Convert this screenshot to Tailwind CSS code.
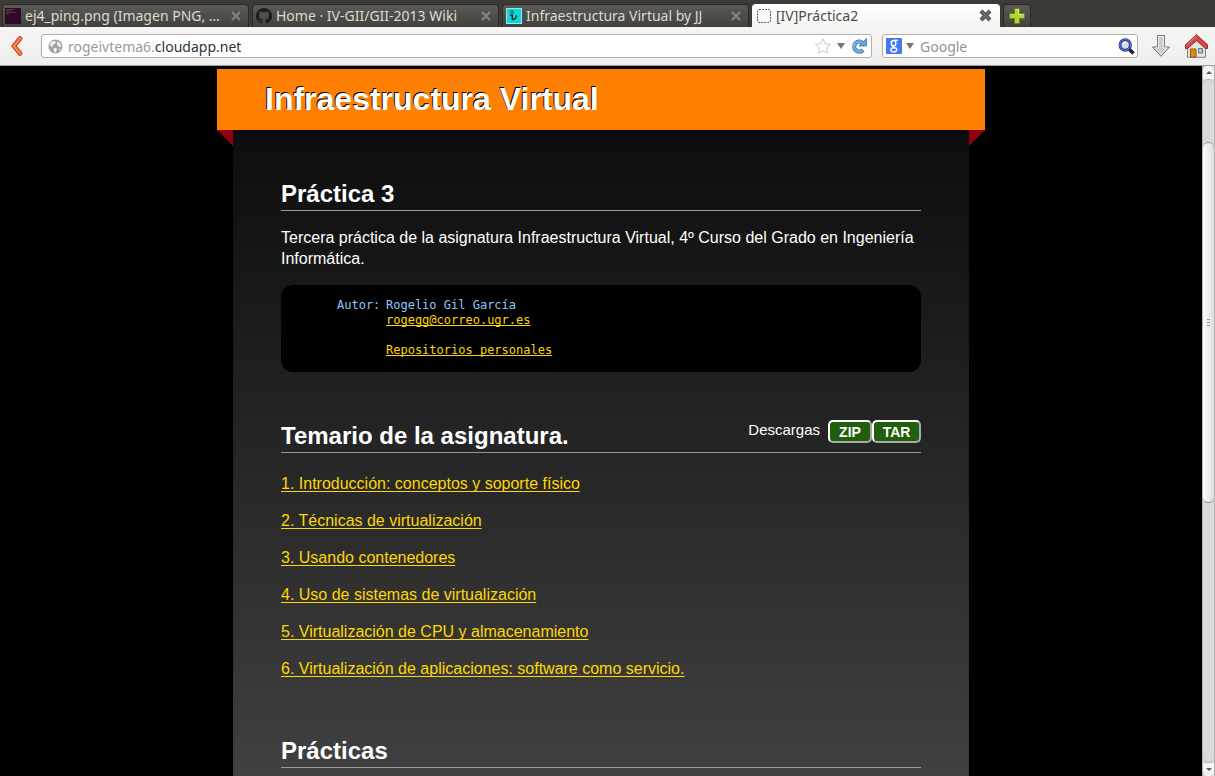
<!DOCTYPE html>
<html lang="es">
<head>
<meta charset="utf-8">
<title>[IV]Práctica2</title>
<script src="https://cdn.jsdelivr.net/npm/@tailwindcss/browser@4"></script>
</head>
<body class="flex h-screen flex-col overflow-hidden bg-black font-['Noto_Sans',sans-serif]">

<!-- Tab strip -->
<nav aria-label="Pestañas" class="flex h-[27px] shrink-0 items-end gap-[3px] bg-[#3c3b37] pl-[2px] text-[14px] leading-[22px] text-[#dfdbd2]">
  <div class="flex h-[23px] w-[247px] items-center gap-1 rounded-t border border-b-0 border-[#2b2a27] bg-linear-to-b from-[#5b5a56] to-[#42413c] pr-[6px] pl-[2px]">
    <svg class="size-4 shrink-0" viewBox="0 0 16 16" aria-hidden="true"><rect width="16" height="16" fill="#300a24"/><path d="M1 1.5h9M1 3h6M1 4.500h10M1 6h3" stroke="#6b4560" stroke-width=".7"/></svg>
    <a href="#" class="min-w-0 flex-1 truncate">ej4_ping.png (Imagen PNG, …</a>
    <button aria-label="Cerrar pestaña"><svg class="size-3" viewBox="0 0 12 12"><path d="M2 2l8 8M10 2l-8 8" stroke="#85837d" stroke-width="2.200"/></svg></button>
  </div>
  <div class="flex h-[23px] w-[247px] items-center gap-1 rounded-t border border-b-0 border-[#2b2a27] bg-linear-to-b from-[#5b5a56] to-[#42413c] pr-[6px] pl-[3px]">
    <svg class="size-4 shrink-0" viewBox="0 0 16 16" aria-hidden="true"><path fill="#1b1b1b" d="M8 0a8 8 0 0 0-2.530 15.590c.4.070.55-.17.55-.38v-1.490c-2.010.37-2.530-.49-2.690-.94-.09-.23-.48-.94-.82-1.130-.28-.15-.68-.52-.01-.53.63-.01 1.080.58 1.230.82.72 1.210 1.870.87 2.330.66.070-.52.280-.87.510-1.070-1.780-.2-3.640-.89-3.640-3.950 0-.87.310-1.590.82-2.150-.08-.2-.36-1.020.08-2.120 0 0 .67-.21 2.200.82a7.400 7.400 0 0 1 4 0c1.530-1.040 2.200-.82 2.200-.82.44 1.100.16 1.920.08 2.120.51.56.82 1.270.82 2.150 0 3.070-1.870 3.750-3.650 3.950.29.25.54.73.54 1.480v2.200c0 .21.15.46.55.38A8 8 0 0 0 8 0z"/></svg>
    <a href="#" class="min-w-0 flex-1 truncate">Home · IV-GII/GII-2013 Wiki</a>
    <button aria-label="Cerrar pestaña"><svg class="size-3" viewBox="0 0 12 12"><path d="M2 2l8 8M10 2l-8 8" stroke="#85837d" stroke-width="2.200"/></svg></button>
  </div>
  <div class="flex h-[23px] w-[247px] items-center gap-1 rounded-t border border-b-0 border-[#2b2a27] bg-linear-to-b from-[#5b5a56] to-[#42413c] pr-[6px] pl-[3px]">
    <svg class="size-4 shrink-0" viewBox="0 0 16 16" aria-hidden="true"><rect x=".5" y=".5" width="15" height="15" fill="#16d5da" stroke="#8deef0"/><circle cx="6" cy="4" r="1.300" fill="none" stroke="#14343a" stroke-width=".8"/><path d="M4 7.300H6.200L6.300 11.300C8.500 12 10.500 10 10.500 7.200" fill="none" stroke="#14343a" stroke-width="1.600"/></svg>
    <a href="#" class="min-w-0 flex-1 truncate">Infraestructura Virtual by JJ</a>
    <button aria-label="Cerrar pestaña"><svg class="size-3" viewBox="0 0 12 12"><path d="M2 2l8 8M10 2l-8 8" stroke="#85837d" stroke-width="2.200"/></svg></button>
  </div>
  <div class="flex h-[23px] w-[248px] items-center gap-1 rounded-t bg-linear-to-b from-white to-[#f5f4f3] pr-2 pl-1 text-[#4c4c4c]">
    <svg class="size-4 shrink-0" viewBox="0 0 16 16" aria-hidden="true"><rect x="1.500" y="1.500" width="13" height="13" rx="1.500" fill="none" stroke="#5c5c5c" stroke-dasharray="2 1"/></svg>
    <a href="#" aria-current="page" class="min-w-0 flex-1 truncate">[IV]Práctica2</a>
    <button aria-label="Cerrar pestaña"><svg class="size-[13px]" viewBox="0 0 13 13"><path d="M2 2l9 9M11 2l-9 9" stroke="#4a4a48" stroke-width="4"/><path d="M2.500 2.500l8 8M10.500 2.500l-8 8" stroke="#6c6c69" stroke-width="2"/></svg></button>
  </div>
  <button aria-label="Nueva pestaña" class="flex h-[23px] w-7 items-center justify-center rounded-t border border-b-0 border-[#2b2a27] bg-linear-to-b from-[#5b5a56] to-[#42413c]">
    <svg class="size-4" viewBox="0 0 16 16"><path d="M5.500.5h5v5h5v5h-5v5h-5v-5h-5v-5h5z" fill="#b4d335" stroke="#5f8a10"/><path d="M6.500 1.500h3v5h5" fill="none" stroke="#d9ec7c"/></svg>
  </button>
</nav>

<!-- Navigation toolbar -->
<div class="flex h-[39px] shrink-0 items-center border-b border-[#a3a39b] bg-linear-to-b from-[#f6f5f4] to-[#efeeec] pr-[7px] pl-[10px] text-[14px]">
  <button aria-label="Atrás" class="mr-[17px]">
    <svg class="h-5 w-[14px]" viewBox="0 0 14 20"><path d="M10 2.500L4 10l6 7.500" fill="none" stroke="#c2401c" stroke-width="4.600" stroke-linecap="round"/><path d="M10 2.500L4 10l6 7.500" fill="none" stroke="#f08650" stroke-width="2.800" stroke-linecap="round"/></svg>
  </button>
  <div class="flex h-6 min-w-0 flex-1 items-center rounded-[3px] border border-[#b0afa8] bg-white pr-1 pl-[6px]">
    <svg class="mr-[5px] size-[15px] shrink-0" viewBox="0 0 15 15" aria-hidden="true"><circle cx="7.500" cy="7.500" r="7" fill="#a1a1a1"/><path d="M2 4l3-2 3 .5L7 5 5 6l-.5 2L2 7zM9 2.500l3 1.500 1.500 3.500-2 .5-2.500-2zM6 8.500l3 1-.5 3L7 14l-1.500-3zM11 10l2-.5-1.500 2.500z" fill="#eee"/></svg>
    <a href="#" class="min-w-0 flex-1 truncate text-[#2e3436]"><span class="text-[#9a9a9a]">rogeivtema6.</span>cloudapp.net</a>
    <button aria-label="Añadir a marcadores"><svg class="size-4" viewBox="0 0 16 16"><path d="M8 .8l2.200 4.900 5.300.6-4 3.600 1.100 5.300L8 12.500l-4.600 2.700 1.100-5.300-4-3.600 5.300-.6z" fill="#fff" stroke="#c9c9c9"/></svg></button>
    <button aria-label="Mostrar historial" class="mr-[6px] ml-[6px]"><svg class="h-[6px] w-2" viewBox="0 0 8 6"><path d="M0 0h8L4 6z" fill="#77766f"/></svg></button>
    <button aria-label="Recargar"><svg class="size-4" viewBox="0 0 16 16"><path d="M11.500 4.800A5 5 0 1 0 12 12" fill="none" stroke="#3d76ad" stroke-width="4.200"/><path d="M15.500.5v7.500H8z" fill="#6ba5d7" stroke="#3d76ad" stroke-width=".8"/><path d="M11.500 4.800A5 5 0 1 0 12 12" fill="none" stroke="#79b0dd" stroke-width="2.600"/></svg></button>
  </div>
  <form class="ml-[10px] flex h-6 w-64 shrink-0 items-center rounded-[3px] border border-[#b0afa8] bg-white pr-[2px] pl-[3px]">
    <button type="button" aria-label="Elegir buscador" class="flex items-center gap-1">
      <svg class="size-4" viewBox="0 0 16 16"><rect width="16" height="16" rx="1" fill="#4378f5"/><ellipse cx="7.600" cy="5.200" rx="2.300" ry="2.600" fill="none" stroke="#fff" stroke-width="1.500"/><path d="M8 2.300h4" stroke="#fff" stroke-width="1.200"/><path d="M7 7.800c-1 1 .5 1.400 1.800 2" fill="none" stroke="#fff" stroke-width="1.300"/><ellipse cx="7.800" cy="11.800" rx="3" ry="2.100" fill="none" stroke="#fff" stroke-width="1.400"/></svg>
      <svg class="h-[6px] w-2" viewBox="0 0 8 6"><path d="M0 0h8L4 6z" fill="#77766f"/></svg>
    </button>
    <input type="text" aria-label="Buscar en Google" placeholder="Google" class="ml-[6px] min-w-0 flex-1 bg-transparent placeholder:text-[#939393] focus:outline-none">
    <button type="button" aria-label="Buscar"><svg class="size-[17px]" viewBox="0 0 17 17"><path d="M10.500 10.500l5 5" stroke="#222" stroke-width="3.600"/><circle cx="7.200" cy="7" r="5.200" fill="#d8dcea" stroke="#24398c" stroke-width="3"/><circle cx="7.200" cy="7" r="5.400" fill="none" stroke="#6b82d0" stroke-width="1"/><path d="M5 6a3 3 0 0 1 3-2" fill="none" stroke="#fff" stroke-width="1.500"/></svg></button>
  </form>
  <button aria-label="Descargas" class="ml-[14px]"><svg class="h-[22px] w-[18px]" viewBox="0 0 18 22"><path d="M5.500.5h7v11.500h5L9 21.300.5 12h5z" fill="#c9cdcf" stroke="#75797b"/><path d="M6.500 1.500h5v11.500h3.500L9 19.500 3 13h3.500z" fill="none" stroke="#eceeee"/></svg></button>
  <button aria-label="Inicio" class="ml-[15px]"><svg class="h-6 w-[23px]" viewBox="0 0 23 24"><path d="M2.500 12L11.500 4l9 8v11.300h-18z" fill="#e4e4e0" stroke="#80807c"/><path d="M5.500 15h5.500v8H5.500z" fill="#d98a1c" stroke="#8f5902"/><path d="M13.500 14.500h4v4.500h-4z" fill="#b8cbd6" stroke="#61727c"/><path d="M11.500.7L.5 10.700v3.800h2l9-8 9 8h2v-3.800z" fill="#d14a4a" stroke="#9d2626"/><path d="M11.500 2L1.500 11.200" stroke="#ea8787"/></svg></button>
</div>

<div class="flex min-h-0 flex-1">
  <!-- Page -->
  <main class="min-w-0 flex-1 overflow-hidden pt-[3px] font-['Liberation_Sans',Arial,sans-serif] text-[16px] leading-[21px] text-white">
    <div class="mx-auto max-w-3xl">
      <header class="bg-[#ff8000] px-12 pt-[10px] pb-[11px]">
        <h1 class="text-[32px] leading-10 font-bold [text-shadow:-1px_-1px_0_#000]">Infraestructura Virtual</h1>
      </header>
      <div class="flex items-start">
        <svg class="size-4 shrink-0" viewBox="0 0 16 16" aria-hidden="true"><path d="M0 0h16v16z" fill="#8e000b"/></svg>
        <div class="min-w-0 flex-1 bg-linear-to-b from-[#0d0d0d] to-[#424242] px-12 pt-12 pb-6 shadow-[inset_0_5px_4px_-3px_#000]">
          <section>
            <h2 class="border-b border-[#999] text-[24px] leading-8 font-bold">Práctica 3</h2>
            <p class="mt-4">Tercera práctica de la asignatura Infraestructura Virtual, 4º Curso del Grado en Ingeniería Informática.</p>
            <div class="mt-4 grid grid-cols-[49px_auto] rounded-xl bg-black pt-[13px] pb-[14px] pl-14 font-['DejaVu_Sans_Mono',monospace] text-[12px] leading-[15px] text-[#8cc8ff]">
              <span>Autor:</span>
              <span>Rogelio Gil García</span>
              <a href="#" class="col-start-2 justify-self-start text-[#ffd700] underline [text-decoration-skip-ink:none]">rogegg@correo.ugr.es</a>
              <a href="#" class="col-start-2 mt-[15px] justify-self-start text-[#ffd700] underline [text-decoration-skip-ink:none]">Repositorios personales</a>
            </div>
          </section>
          <section class="mt-12">
            <div class="flex items-start justify-between border-b border-[#999]">
              <h2 class="text-[24px] leading-8 font-bold">Temario de la asignatura.</h2>
              <div class="flex text-[15px] leading-5">
                <span class="mr-2">Descargas</span>
                <button class="h-[23px] w-11 rounded-[5px] border-2 border-t-white border-r-[#aaa] border-b-[#aaa] border-l-white bg-[#20600c] text-[14px] leading-5 font-bold">ZIP</button>
                <button class="h-[23px] w-[49px] rounded-[5px] border-2 border-t-white border-r-[#aaa] border-b-[#aaa] border-l-white bg-[#20600c] text-[14px] leading-5 font-bold">TAR</button>
              </div>
            </div>
            <ul class="mt-5 flex flex-col items-start gap-4 text-[#ffd700] [text-decoration-skip-ink:none]">
              <li><a href="#" class="underline underline-offset-2">1. Introducción: conceptos y soporte físico</a></li>
              <li><a href="#" class="underline underline-offset-2">2. Técnicas de virtualización</a></li>
              <li><a href="#" class="underline underline-offset-2">3. Usando contenedores</a></li>
              <li><a href="#" class="underline underline-offset-2">4. Uso de sistemas de virtualización</a></li>
              <li><a href="#" class="underline underline-offset-2">5. Virtualización de CPU y almacenamiento</a></li>
              <li><a href="#" class="underline underline-offset-2">6. Virtualización de aplicaciones: software como servicio.</a></li>
            </ul>
          </section>
          <section class="mt-14">
            <h2 class="border-b border-[#999] text-[24px] leading-8 font-bold">Prácticas</h2>
          </section>
        </div>
        <svg class="size-4 shrink-0" viewBox="0 0 16 16" aria-hidden="true"><path d="M0 0h16L0 16z" fill="#8e000b"/></svg>
      </div>
    </div>
  </main>

  <!-- Scrollbar -->
  <div class="flex w-[13px] shrink-0 flex-col border-x border-[#b5b3af] bg-[#dcdad8]">
    <button aria-label="Subir" class="flex h-[13px] items-center justify-center rounded-t-lg bg-[#f4f3f2]"><svg class="h-[3px] w-[6px]" viewBox="0 0 6 3"><path d="M3 0l3 3H0z" fill="#5a5a5a"/></svg></button>
    <div class="flex min-h-0 flex-1 flex-col rounded-full border-y border-[#b5b3af] bg-[#dcdad8]">
      <div class="basis-[62px]"></div>
      <div class="flex h-[361px] flex-col items-center justify-center gap-[2px] rounded-full border-y border-[#8f8d89] bg-linear-to-r from-white to-[#dedcda]">
        <span class="h-px w-[3px] bg-[#999]"></span><span class="h-px w-[3px] bg-[#999]"></span><span class="h-px w-[3px] bg-[#999]"></span>
      </div>
    </div>
    <button aria-label="Bajar" class="flex h-[13px] items-center justify-center rounded-b-lg bg-[#f4f3f2]"><svg class="h-[3px] w-[6px]" viewBox="0 0 6 3"><path d="M3 3l3-3H0z" fill="#5a5a5a"/></svg></button>
  </div>
</div>
</body>
</html>
